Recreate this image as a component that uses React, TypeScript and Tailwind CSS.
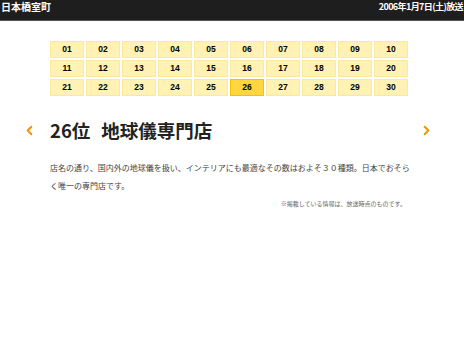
import { ChevronLeft, ChevronRight } from "lucide-react";

const DAYS = Array.from({ length: 30 }, (_, i) => String(i + 1).padStart(2, "0"));
const ACTIVE = "26";

const jp = { fontFamily: '"Noto Sans CJK JP", "Noto Sans", sans-serif' };

export default function App() {
  return (
    <div className="w-[464px] h-[348px] bg-white overflow-hidden" style={jp}>
      {/* header */}
      <div className="h-[21px] bg-[#1e1e1e] border-b border-[#555] flex items-start justify-between px-[1px] text-white font-bold">
        <span className="text-[10px] leading-[14px]">日本橋室町</span>
        <span className="text-[9px] leading-[14px] tracking-[-0.6px]">2006年1月7日(土)放送</span>
      </div>

      {/* ranking grid */}
      <div
        className="ml-[50px] mt-[20px] grid grid-cols-[repeat(10,34px)] gap-[2px]"
        style={{ fontFamily: '"Liberation Sans", Arial, sans-serif' }}
      >
        {DAYS.map((d) => (
          <div
            key={d}
            className={`h-[17px] flex items-center justify-center text-[8.5px] font-bold text-black border ${
              d === ACTIVE ? "bg-[#ffd642] border-[#f3c200]" : "bg-[#fff2b4] border-[#fde89c]"
            }`}
          >
            {d}
          </div>
        ))}
      </div>

      {/* title */}
      <div className="mt-[19px] h-[30px] flex items-center">
        <ChevronLeft className="ml-[22px] w-[15px] h-[15px] text-[#f39200]" strokeWidth={3} />
        <h1 className="ml-[13px] text-[18.5px] leading-[30px] font-bold text-[#222]">
          26位<span className="ml-[11px]">地球儀専門店</span>
        </h1>
        <ChevronRight className="ml-auto mr-[30px] w-[15px] h-[15px] text-[#f39200]" strokeWidth={3} />
      </div>

      {/* body */}
      <p className="ml-[50px] mt-[14px] w-[362px] text-[8px] leading-[18px] text-[#444]">
        店名の通り、国内外の地球儀を扱い、インテリアにも最適なその数はおよそ３０種類。日本でおそらく唯一の専門店です。
      </p>
      <p className="mt-[3px] w-[406px] text-right text-[6px] leading-[12px] text-[#666]">
        ※掲載している情報は、放送時点のものです。
      </p>
    </div>
  );
}
